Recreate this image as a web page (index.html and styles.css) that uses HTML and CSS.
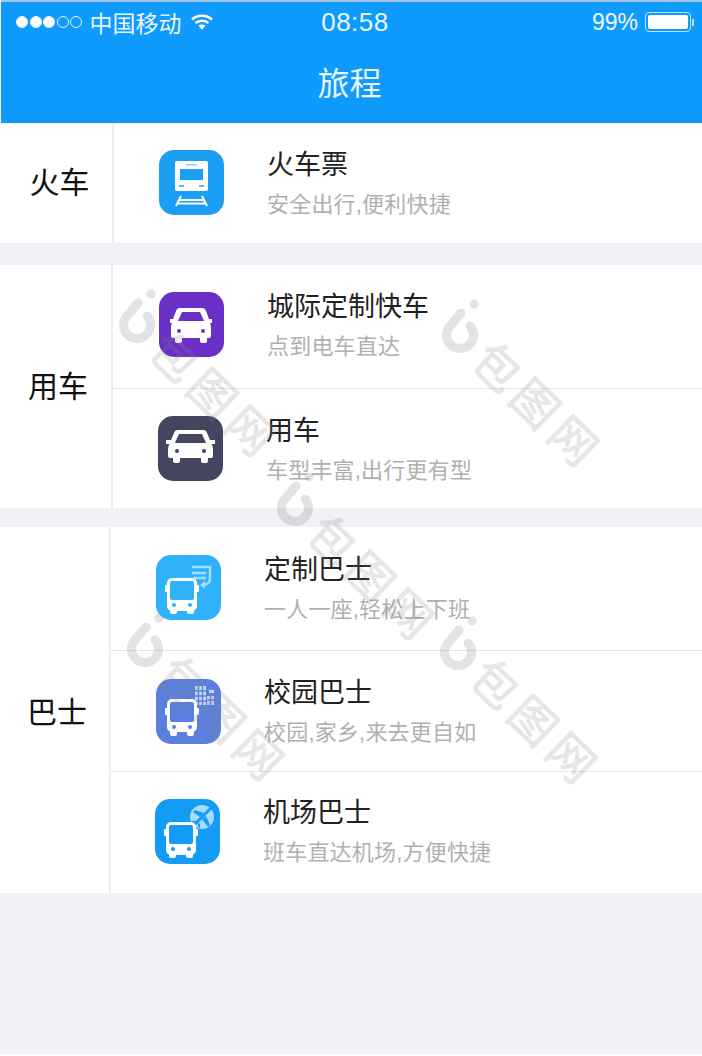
FILE: index.html
```html
<!DOCTYPE html>
<html lang="zh-CN">
<head>
    <meta charset="UTF-8">
    <title>旅程</title>
    <link rel="stylesheet" href="styles.css">
</head>
<body>
<div class="page">
    <div class="header">
        <div class="status">
            <div class="status-left">
                <span class="dot on"></span><span class="dot on"></span><span class="dot on"></span><span class="dot"></span><span class="dot"></span>
                <span class="carrier">中国移动</span>
                <svg class="wifi" width="24" height="18" viewBox="0 0 22 18"><path d="M1 6.500C6.500 1.500 15.500 1.500 21 6.500" fill="none" stroke="#fff" stroke-width="2.400"/><path d="M4.500 10C8 7 14 7 17.500 10" fill="none" stroke="#fff" stroke-width="2.400"/><path d="M7.500 12.500C9.500 11 12.500 11 14.500 12.500L11 17Z" fill="#fff"/></svg>
            </div>
            <div class="time">08:58</div>
            <div class="status-right">
                <span class="percent">99%</span>
                <span class="battery"><span class="battery-fill"></span></span>
                <span class="battery-tip"></span>
            </div>
        </div>
        <div class="title">旅程</div>
    </div>

    <div class="section train">
        <div class="cat">火车</div>
        <div class="rows">
            <div class="row">
                <svg class="icon" viewBox="0 0 65 65">
                    <rect width="65" height="65" rx="15" fill="#1a9ff4"/>
                    <rect x="16" y="11" width="33" height="30" rx="2" fill="#fff"/>
                    <rect x="21" y="19" width="23" height="11" fill="#1a9ff4"/>
                    <rect x="27" y="14" width="11" height="1.500" fill="#8ccdf8"/>
                    <rect x="20" y="35" width="5" height="2" fill="#5fb8f6"/>
                    <rect x="40" y="35" width="5" height="2" fill="#5fb8f6"/>
                    <path d="M22 46L17 56M43 46L48 56M20 50H45M18 53.500H47" stroke="#fff" stroke-width="2" fill="none"/>
                </svg>
                <div class="text">
                    <div class="name">火车票</div>
                    <div class="desc">安全出行,便利快捷</div>
                </div>
            </div>
        </div>
    </div>

    <div class="section car">
        <div class="cat">用车</div>
        <div class="rows">
            <div class="row first-car">
                <svg class="icon" viewBox="0 0 65 65">
                    <rect width="65" height="65" rx="15" fill="#6a2fc6"/>
                    <path d="M21 16H43Q46 16 47 19L50 27H53V31H51Q52 33 52 36V44Q52 46 50 46H48V49Q48 51 46 51H43Q41 51 41 49V46H23V49Q23 51 21 51H18Q16 51 16 49V46H14Q12 46 12 44V36Q12 33 13 31H11V27H14L17 19Q18 16 21 16Z" fill="#fff"/>
                    <path d="M23 20H41L45 29H19Z" fill="#6a2fc6"/>
                    <circle cx="20" cy="39" r="2" fill="#6a2fc6"/>
                    <circle cx="44" cy="39" r="2" fill="#6a2fc6"/>
                </svg>
                <div class="text">
                    <div class="name">城际定制快车</div>
                    <div class="desc">点到电车直达</div>
                </div>
            </div>
            <div class="row second-car">
                <svg class="icon" viewBox="0 0 65 65">
                    <rect width="65" height="65" rx="15" fill="#44465f"/>
                    <path d="M20 14H45Q48 14 49 17L52 24H57V28H53.500Q55 30 55 33V40Q55 42 53 42H50V45Q50 47 48 47H45Q43 47 43 45V42H22V45Q22 47 20 47H17Q15 47 15 45V42H12Q10 42 10 40V33Q10 30 11.500 28H8V24H13L16 17Q17 14 20 14Z" fill="#fff"/>
                    <path d="M21 18H44L48 27H17Z" fill="#44465f"/>
                    <circle cx="19" cy="35" r="2" fill="#44465f"/>
                    <circle cx="46" cy="35" r="2" fill="#44465f"/>
                </svg>
                <div class="text">
                    <div class="name">用车</div>
                    <div class="desc">车型丰富,出行更有型</div>
                </div>
            </div>
        </div>
    </div>

    <div class="section bus">
        <div class="cat">巴士</div>
        <div class="rows">
            <div class="row bus-1">
                <svg class="icon" viewBox="0 0 65 65">
                    <rect width="65" height="65" rx="15" fill="#2fb2fb"/>
                    <path d="M36 12H54V24Q54 30 46 30M36 18H50M38 23H50" fill="none" stroke="#a5defd" stroke-width="2.500"/>
                    <path d="M49 26L44 30L49 34Z" fill="#a5defd"/>
                    <rect x="9" y="30" width="34" height="7" rx="1" fill="#fff"/>
                    <rect x="11" y="23" width="30" height="33" rx="5" fill="#fff"/>
                    <rect x="14" y="26" width="24" height="19" rx="2" fill="#2fb2fb"/>
                    <circle cx="18" cy="50" r="2" fill="#2fb2fb"/>
                    <circle cx="34" cy="50" r="2" fill="#2fb2fb"/>
                    <rect x="14" y="52" width="7" height="7" rx="2" fill="#fff"/>
                    <rect x="31" y="52" width="7" height="7" rx="2" fill="#fff"/>
                </svg>
                <div class="text">
                    <div class="name">定制巴士</div>
                    <div class="desc">一人一座,轻松上下班</div>
                </div>
            </div>
            <div class="row bus-2">
                <svg class="icon" viewBox="0 0 65 65">
                    <rect width="65" height="65" rx="15" fill="#5b7fdc"/>
                    <path d="M39 7H50V26H39ZM51 17H58V26H51ZM53 11H58V14H53Z" fill="#c6d4f5"/>
                    <path d="M42.500 7V26M46.500 7V26M39 12H50M39 17H50M39 22H50M54.500 17V26M51 21H58" stroke="#5b7fdc" stroke-width="1.300"/>
                    <rect x="9" y="29" width="34" height="7" rx="1" fill="#fff"/>
                    <rect x="11" y="20" width="30" height="33" rx="5" fill="#fff"/>
                    <rect x="14" y="23" width="24" height="20" rx="2" fill="#5b7fdc"/>
                    <circle cx="18" cy="48" r="2" fill="#5b7fdc"/>
                    <circle cx="34" cy="48" r="2" fill="#5b7fdc"/>
                    <rect x="14" y="50" width="7" height="7" rx="2" fill="#fff"/>
                    <rect x="31" y="50" width="7" height="7" rx="2" fill="#fff"/>
                </svg>
                <div class="text">
                    <div class="name">校园巴士</div>
                    <div class="desc">校园,家乡,来去更自如</div>
                </div>
            </div>
            <div class="row bus-3">
                <svg class="icon" viewBox="0 0 65 65">
                    <rect width="65" height="65" rx="15" fill="#149bf5"/>
                    <circle cx="47" cy="18" r="12" fill="#a6dafb"/>
                    <path d="M40 25L55 10" stroke="#149bf5" stroke-width="3" stroke-linecap="round"/>
                    <path d="M49 14L40 11L38 13L45 18ZM51 17L55 26L53 28L47 20ZM42 22L37 22L36 24L41 25ZM43 23L43 28L45 29L45 25Z" fill="#149bf5"/>
                    <rect x="9" y="30" width="34" height="7" rx="1" fill="#fff"/>
                    <rect x="11" y="23" width="30" height="33" rx="5" fill="#fff"/>
                    <rect x="14" y="26" width="24" height="19" rx="2" fill="#149bf5"/>
                    <circle cx="18" cy="50" r="2" fill="#149bf5"/>
                    <circle cx="34" cy="50" r="2" fill="#149bf5"/>
                    <rect x="14" y="52" width="7" height="7" rx="2" fill="#fff"/>
                    <rect x="31" y="52" width="7" height="7" rx="2" fill="#fff"/>
                </svg>
                <div class="text">
                    <div class="name">机场巴士</div>
                    <div class="desc">班车直达机场,方便快捷</div>
                </div>
            </div>
        </div>
    </div>

    <!-- 水印 -->
    <div class="wm wm1"><svg class="wm-logo" viewBox="0 0 38 56"><path d="M19 14L8 27A13.500 13.500 0 1 0 28 27" fill="none" stroke="#777" stroke-width="9" stroke-linecap="round"/><circle cx="32" cy="5" r="4.500" fill="#777"/></svg><span class="wm-text">包图网</span></div>
    <div class="wm wm2"><svg class="wm-logo" viewBox="0 0 38 56"><path d="M19 14L8 27A13.500 13.500 0 1 0 28 27" fill="none" stroke="#777" stroke-width="9" stroke-linecap="round"/><circle cx="32" cy="5" r="4.500" fill="#777"/></svg><span class="wm-text">包图网</span></div>
    <div class="wm wm3"><svg class="wm-logo" viewBox="0 0 38 56"><path d="M19 14L8 27A13.500 13.500 0 1 0 28 27" fill="none" stroke="#777" stroke-width="9" stroke-linecap="round"/><circle cx="32" cy="5" r="4.500" fill="#777"/></svg><span class="wm-text">包图网</span></div>
    <div class="wm wm4"><svg class="wm-logo" viewBox="0 0 38 56"><path d="M19 14L8 27A13.500 13.500 0 1 0 28 27" fill="none" stroke="#777" stroke-width="9" stroke-linecap="round"/><circle cx="32" cy="5" r="4.500" fill="#777"/></svg><span class="wm-text">包图网</span></div>
    <div class="wm wm5"><svg class="wm-logo" viewBox="0 0 38 56"><path d="M19 14L8 27A13.500 13.500 0 1 0 28 27" fill="none" stroke="#777" stroke-width="9" stroke-linecap="round"/><circle cx="32" cy="5" r="4.500" fill="#777"/></svg><span class="wm-text">包图网</span></div>
</div>
</body>
</html>
```

FILE: styles.css
```css
* {
    margin: 0;
    padding: 0;
    box-sizing: border-box;
}

html, body {
    height: 100%;
    background: #fff;
}

body {
    overflow: hidden;
    font-family: "Liberation Sans", "Noto Sans CJK SC", sans-serif;
}

.page {
    position: relative;
    width: 702px;
    height: 1054px;
    background: #f0f0f6;
}

/* 顶部 */
.header {
    height: 123px;
    margin-left: 1px;
    padding-top: 2px;
    background: #0f9afe;
    border-top: 2px solid #a3c6e2;
    color: #eaf6ff;
}

.status {
    display: grid;
    grid-template-columns: 1fr auto 1fr;
    align-items: center;
    height: 36px;
    padding: 0 8px 0 15px;
}

.status-left,
.status-right {
    display: flex;
    align-items: center;
}

.status-right {
    justify-content: flex-end;
}

.dot {
    width: 12px;
    height: 12px;
    margin-right: 1.500px;
    border: 1px solid #eaf6ff;
    border-radius: 50%;
}

.dot.on {
    background: #fff;
}

.carrier {
    margin-left: 6px;
    font-size: 23px;
}

.wifi {
    margin-left: 8px;
}

.time {
    font-size: 26px;
    letter-spacing: .5px;
}

.percent {
    font-size: 23px;
}

.battery {
    width: 46px;
    height: 20px;
    margin-left: 7px;
    padding: 2px;
    border: 1px solid #bfe3fb;
    border-radius: 4px;
}

.battery-fill {
    display: block;
    height: 100%;
    background: #fff;
    border-radius: 2px;
}

.battery-tip {
    width: 2px;
    height: 7px;
    margin-left: 1px;
    background: #bfe3fb;
}

.title {
    padding-top: 19px;
    padding-right: 4px;
    font-size: 32px;
    line-height: 50px;
    text-align: center;
}

/* 分组 */
.section {
    display: flex;
    background: #fff;
}

.train {
    height: 119px;
    margin-top: 1px;
    margin-bottom: 22px;
}

.car {
    height: 243px;
    margin-bottom: 19px;
}

.bus {
    height: 366px;
}

.cat {
    flex: none;
    display: flex;
    align-items: center;
    justify-content: center;
    width: 114px;
    padding: 0 0 8px 7px;
    border-right: 2px solid #ececec;
    font-size: 30px;
    color: #111;
}

.car .cat {
    width: 113px;
    padding: 0 0 6px 5px;
}

.bus .cat {
    width: 111px;
    padding: 0 0 0 5px;
}

.rows {
    flex: 1;
    display: flex;
    flex-direction: column;
}

.row {
    flex: 1;
    display: flex;
    align-items: center;
    padding: 0 0 2px 45px;
    border-top: 1px solid #e6e6e6;
}

.row:first-child {
    border-top: 0;
}

.first-car {
    flex: none;
    height: 123px;
    padding: 0 0 4px 46px;
}

.second-car {
    flex: none;
    height: 120px;
    padding-bottom: 0;
}

.bus-1 {
    flex: none;
    height: 123px;
}

.bus-2 {
    flex: none;
    height: 121px;
    padding-bottom: 0;
}

.bus-3 {
    flex: none;
    height: 122px;
    padding: 0 0 3px 44px;
}

.icon {
    flex: none;
    width: 65px;
    height: 65px;
    margin-right: 43px;
}

.text {
    min-width: 0;
}

.name {
    font-size: 27px;
    line-height: 38px;
    color: #222;
}

.desc {
    margin-top: 6px;
    font-size: 22px;
    line-height: 30px;
    letter-spacing: .2px;
    color: #b0b0b0;
}

/* 水印 */
.wm {
    position: absolute;
    width: 38px;
    height: 56px;
    opacity: .2;
    pointer-events: none;
}

.wm1 { left: 119px; top: 289px; }
.wm2 { left: 442px; top: 299px; }
.wm3 { left: 277px; top: 472px; }
.wm4 { left: 127px; top: 613px; }
.wm5 { left: 440px; top: 616px; }

.wm-logo {
    display: block;
    width: 38px;
    height: 56px;
}

.wm-text {
    position: absolute;
    left: 95px;
    top: 108px;
    transform: translate(-50%, -50%) rotate(44deg);
    white-space: nowrap;
    font-size: 46px;
    letter-spacing: 7px;
    line-height: 1;
    -webkit-text-stroke: 1px #888;
    color: #888;
}
```
